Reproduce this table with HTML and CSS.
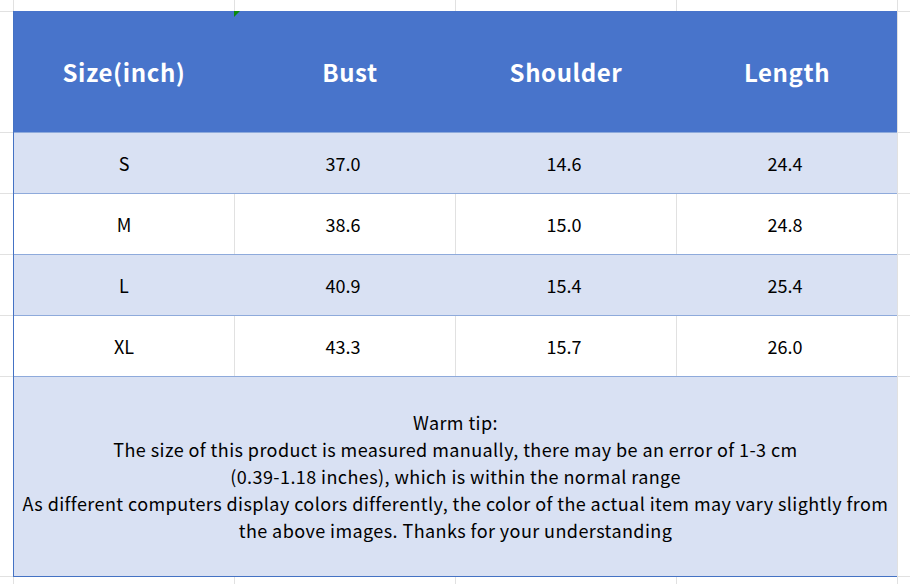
FILE: index.html
```html
<!DOCTYPE html>
<html lang="en">
<head>
<meta charset="utf-8">
<title>Size chart</title>
<link rel="stylesheet" href="styles.css">
</head>
<body>
<div class="sheet">
  <div class="chart">
    <div class="row head">
      <div class="cell">Size(inch)</div>
      <div class="cell marked"><span class="flag"></span>Bust</div>
      <div class="cell">Shoulder</div>
      <div class="cell">Length</div>
    </div>
    <div class="row shade">
      <div class="cell">S</div>
      <div class="cell">37.0</div>
      <div class="cell">14.6</div>
      <div class="cell">24.4</div>
    </div>
    <div class="row plain">
      <div class="cell">M</div>
      <div class="cell">38.6</div>
      <div class="cell">15.0</div>
      <div class="cell">24.8</div>
    </div>
    <div class="row shade">
      <div class="cell">L</div>
      <div class="cell">40.9</div>
      <div class="cell">15.4</div>
      <div class="cell">25.4</div>
    </div>
    <div class="row plain">
      <div class="cell">XL</div>
      <div class="cell">43.3</div>
      <div class="cell">15.7</div>
      <div class="cell">26.0</div>
    </div>
    <div class="tip">
      <p>Warm tip:<br>The size of this product is measured manually, there may be an error of 1-3 cm<br>(0.39-1.18 inches), which is within the normal range<br>As different computers display colors differently, the color of the actual item may vary slightly from<br>the above images. Thanks for your understanding</p>
    </div>
  </div>
  <div class="g"></div><div class="g"></div><div class="g"></div><div class="g"></div><div class="g"></div><div class="g"></div>
  <div class="g"></div><div class="g"></div><div class="g"></div><div class="g"></div><div class="g"></div><div class="g"></div>
  <div class="g"></div><div class="g"></div><div class="g"></div><div class="g"></div><div class="g"></div><div class="g"></div>
  <div class="g"></div><div class="g"></div><div class="g"></div><div class="g"></div><div class="g"></div><div class="g"></div>
</div>
</body>
</html>
```

FILE: styles.css
```css
html, body {
  margin: 0;
  padding: 0;
  background: #ffffff;
}

.sheet {
  display: grid;
  grid-template-columns: 13px 220px 220px 220px 220px 12px;
  grid-template-rows: 11px 120px 60px 60px 60px 60px 199px 7px;
  gap: 1px;
  width: 910px;
  height: 584px;
  background: #e1e1e1;
  overflow: hidden;
  font-family: "Noto Sans CJK KR", "Noto Sans", sans-serif;
}

.g {
  background: #ffffff;
}

.chart {
  grid-column: 2 / 6;
  grid-row: 2 / 8;
  margin: -1px 0 -1px -1px;
  display: flex;
  flex-direction: column;
  border-left: 1px solid #4472c4;
  background: #ffffff;
}

.row {
  display: grid;
  grid-template-columns: 220px 221px 221px 221px;
}

.cell {
  display: flex;
  align-items: center;
  justify-content: center;
  white-space: nowrap;
}

.cell + .cell {
  border-left: 1px solid transparent;
}

.head {
  height: 121px;
  background: #4874cb;
  color: #ffffff;
  font-size: 24px;
  font-weight: 700;
  letter-spacing: 0.6px;
}

.marked {
  position: relative;
  padding-left: 10px;
}

.flag {
  position: absolute;
  left: -1px;
  top: 0;
  width: 0;
  height: 0;
  border-top: 6px solid #0a8a0a;
  border-right: 6px solid transparent;
}

.shade,
.plain {
  height: 60px;
  border-top: 1px solid #8eaadb;
  font-size: 18px;
  color: #000000;
}

.shade .cell + .cell,
.plain .cell + .cell {
  padding-right: 4px;
}

.shade {
  background: #d9e1f3;
}

.plain {
  background: #ffffff;
}

.plain .cell + .cell {
  border-left-color: #e1e1e1;
}

.tip {
  flex: 1;
  display: flex;
  align-items: center;
  justify-content: center;
  background: #d9e1f3;
  border-top: 1px solid #8eaadb;
  border-bottom: 1px solid #4472c4;
}

.tip p {
  margin: 0;
  text-align: center;
  font-size: 18px;
  line-height: 27px;
  letter-spacing: 0.42px;
  white-space: nowrap;
  color: #000000;
}
```
